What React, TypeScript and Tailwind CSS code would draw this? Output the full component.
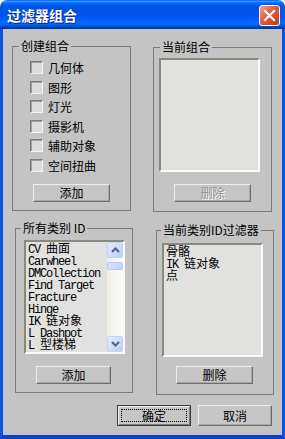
import React from "react";

const CJK = /([\u4e00-\u9fff]+)/;

function Mixed({ text }: { text: string }) {
  const parts = text.split(CJK).filter(Boolean);
  return (
    <>
      {parts.map((p, i) =>
        /[\u4e00-\u9fff]/.test(p) ? (
          <span key={i} className="font-['Noto_Sans_CJK_SC',sans-serif] text-[12px] leading-[12px]">
            {p}
          </span>
        ) : (
          <span
            key={i}
            className="font-['Liberation_Mono',monospace] text-[12px] leading-[12px] tracking-[-1.2px] whitespace-pre"
          >
            {p}
          </span>
        )
      )}
    </>
  );
}

function Group({
  label,
  labelClass,
  className,
  children,
}: {
  label: string;
  labelClass: string;
  className: string;
  children: React.ReactNode;
}) {
  return (
    <div className={"relative flex flex-col border border-[#7c7c7c] shrink-0 " + className}>
      <div className={"absolute -top-[8px] px-[2px] bg-[#c4c4c4] text-[12px] leading-[14px] whitespace-pre " + labelClass}>
        {label}
      </div>
      {children}
    </div>
  );
}

function Btn({
  className,
  disabled,
  children,
}: {
  className: string;
  disabled?: boolean;
  children: React.ReactNode;
}) {
  return (
    <div
      className={
        "flex items-center justify-center shrink-0 border border-t-[#ececec] border-l-[#ececec] border-b-[#6e6e6e] border-r-[#6e6e6e] shadow-[inset_-1px_-1px_0_#a8a8a8] bg-[#c6c6c6] text-[12px] leading-none " +
        (disabled ? "text-[#8e8e8e] [text-shadow:1px_1px_0_#ffffff] " : "text-black ") +
        className
      }
    >
      {children}
    </div>
  );
}

function Check({ label }: { label: string }) {
  return (
    <div className="flex items-center h-[13px] gap-[5px]">
      <div className="w-[13px] h-[13px] shrink-0 border border-t-[#7a7a7a] border-l-[#7a7a7a] border-b-[#f4f4f4] border-r-[#f4f4f4] bg-[#dcdcdc] shadow-[inset_1px_1px_0_#a0a0a0]" />
      <span className="text-[12px] leading-[13px]">{label}</span>
    </div>
  );
}

function ListBox({ className, children }: { className: string; children?: React.ReactNode }) {
  return (
    <div
      className={
        "flex w-[101px] h-[114px] shrink-0 border-2 border-t-[#8b887c] border-l-[#8b887c] border-b-[#fbfbf4] border-r-[#fbfbf4] bg-[#e1e2e0] overflow-hidden " +
        className
      }
    >
      {children}
    </div>
  );
}

function Arrow({ up }: { up?: boolean }) {
  return (
    <svg width="9" height="6" viewBox="0 0 9 6">
      <path
        d={up ? "M1 5 L4.5 1.5 L8 5" : "M1 1 L4.5 4.5 L8 1"}
        fill="none"
        stroke="#4d6185"
        strokeWidth="2"
      />
    </svg>
  );
}

function ScrollBtn({ up }: { up?: boolean }) {
  return (
    <div className="w-[16px] h-[16px] shrink-0 flex items-center justify-center rounded-[2px] border border-[#c0d0f8] bg-[linear-gradient(135deg,#e4ecfe,#bccdf9)]">
      <Arrow up={up} />
    </div>
  );
}

const ITEMS = [
  "CV 曲面",
  "Carwheel",
  "DMCollection",
  "Find Target",
  "Fracture",
  "Hinge",
  "IK 链对象",
  "L Dashpot",
  "L 型楼梯",
];

const CURRENT = ["骨骼", "IK 链对象", "点"];

export default function App() {
  return (
    <div className="w-[285px] h-[439px] flex flex-col bg-white font-['Noto_Sans_CJK_SC',sans-serif] text-[12px] text-black select-none">
      {/* title bar */}
      <div className="h-[29px] shrink-0 rounded-t-[7px] bg-[linear-gradient(to_bottom,#0058ee_0%,#3593ff_4%,#288eff_6%,#127dff_8%,#036ffc_10%,#0262ee_14%,#0057e5_20%,#0054e3_24%,#0055eb_56%,#005bf5_66%,#026afe_76%,#0062ef_86%,#0052d6_92%,#0040ab_94%,#003092_100%)] flex items-center justify-between pl-[7px] pr-[5px]">
        <span className="text-white font-bold text-[14px] leading-none [text-shadow:1px_1px_0_#0a1e8a] mt-[1px]">
          过滤器组合
        </span>
        <div className="w-[21px] h-[21px] mt-[1px] rounded-[3px] border border-white bg-[linear-gradient(135deg,#f3a68c_0%,#e0593a_45%,#c4391c_100%)] flex items-center justify-center">
          <svg width="13" height="13" viewBox="0 0 13 13">
            <path d="M2 2 L11 11 M11 2 L2 11" stroke="#ffffff" strokeWidth="2.2" strokeLinecap="square" />
          </svg>
        </div>
      </div>

      {/* frame */}
      <div className="flex-1 flex border-l-[3px] border-r-[3px] border-b-[4px] border-l-[#0b53e2] border-r-[#0b53e2] border-b-[#0842c9]">
        <div className="flex-1 bg-[#c4c4c4] flex flex-col">
          {/* row 1 */}
          <div className="flex items-start pl-[9px] pt-[17px]">
            <Group label="创建组合" labelClass="left-[6px]" className="w-[119px] h-[165px]">
              <div className="mt-[14px] ml-[17px] flex flex-col gap-[6.5px]">
                <Check label="几何体" />
                <Check label="图形" />
                <Check label="灯光" />
                <Check label="摄影机" />
                <Check label="辅助对象" />
                <Check label="空间扭曲" />
              </div>
              <Btn className="mt-[12.5px] ml-[20px] w-[77px] h-[18px]">添加</Btn>
            </Group>
            <Group label="当前组合" labelClass="left-[6px]" className="ml-[22px] mt-[1px] w-[119px] h-[165px]">
              <ListBox className="mt-[10px] ml-[5px]" />
              <Btn disabled className="mt-[12px] ml-[20px] w-[77px] h-[18px]">
                删除
              </Btn>
            </Group>
          </div>

          {/* row 2 */}
          <div className="flex items-start pl-[12px] mt-[16px]">
            <Group label="所有类别 ID" labelClass="left-[5px]" className="w-[118px] h-[165px]">
              <ListBox className="mt-[11px] ml-[8px]">
                <div className="flex-1 flex flex-col pl-[2px]">
                  {ITEMS.map((t) => (
                    <div key={t} className="h-[12px] leading-[12px] whitespace-nowrap overflow-visible">
                      <Mixed text={t} />
                    </div>
                  ))}
                </div>
                <div className="w-[16px] h-full shrink-0 flex flex-col bg-[linear-gradient(to_right,#efeee6,#fcfcf8)]">
                  <ScrollBtn up />
                  <div className="mt-[4px] w-[16px] h-[8px] rounded-[2px] border border-[#b4c6f4] bg-[linear-gradient(to_right,#d6e1fd,#c2d3fb)]" />
                  <div className="flex-1" />
                  <ScrollBtn />
                </div>
              </ListBox>
              <Btn className="mt-[12px] ml-[20px] w-[75px] h-[18px]">添加</Btn>
            </Group>
            <Group label="当前类别ID过滤器" labelClass="left-[4px]" className="ml-[23px] mt-[2px] w-[118px] h-[165px]">
              <ListBox className="mt-[12px] ml-[5px]">
                <div className="flex-1 flex flex-col pl-[2px]">
                  {CURRENT.map((t) => (
                    <div key={t} className="h-[12px] leading-[12px] whitespace-nowrap">
                      <Mixed text={t} />
                    </div>
                  ))}
                </div>
              </ListBox>
              <Btn className="mt-[9px] ml-[19px] w-[77px] h-[18px]">删除</Btn>
            </Group>
          </div>

          {/* bottom buttons */}
          <div className="flex justify-end gap-[7px] pr-[10px] mt-[10px]">
            <div className="relative w-[74px] h-[21px] flex items-center justify-center border border-[#3c3c3c] bg-[#c6c6c6] shadow-[inset_1px_1px_0_#ececec,inset_-1px_-1px_0_#7a7a7a] text-[12px] leading-none">
              <div className="absolute inset-[3px] border border-dotted border-black" />
              确定
            </div>
            <Btn className="w-[74px] h-[21px]">取消</Btn>
          </div>
        </div>
      </div>
    </div>
  );
}
